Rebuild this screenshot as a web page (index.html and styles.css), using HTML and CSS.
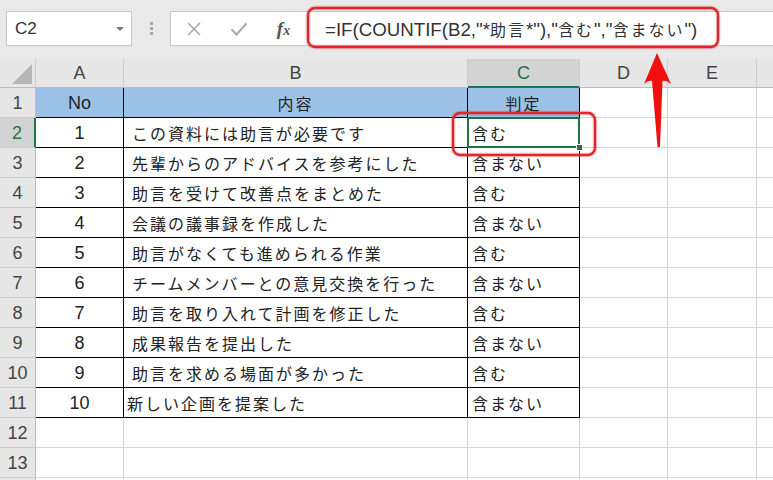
FILE: index.html
```html
<!DOCTYPE html>
<html lang="ja">
<head>
  <meta charset="UTF-8">
  <title>COUNTIF 部分一致</title>
  <link rel="stylesheet" href="styles.css">
</head>
<body>
  <div class="toolbar">
    <div class="namebox"><span>C2</span><span class="caret"></span></div>
    <div class="grip"><span></span><span></span><span></span></div>
    <div class="fbar">
      <div class="fbtns">
        <span class="fbtn">
          <svg width="16" height="16" viewBox="0 0 16 16"><path d="M2 2L14 14M14 2L2 14" stroke="#a9a9a9" stroke-width="1.6" fill="none"/></svg>
        </span>
        <span class="fbtn">
          <svg width="18" height="16" viewBox="0 0 18 16"><path d="M1.5 8.5L6.5 13.5L16.5 2.5" stroke="#a9a9a9" stroke-width="2" fill="none"/></svg>
        </span>
        <span class="fbtn fx"><i>f</i><i class="x">x</i></span>
      </div>
      <div class="formula">=IF(COUNTIF(B2,"*<span class="jp">助言</span>*"),"<span class="jp">含む</span>","<span class="jp">含まない</span>")</div>
    </div>
  </div>

  <table class="sheet">
    <colgroup>
      <col class="c-row"><col class="c-a"><col class="c-b"><col class="c-c"><col class="c-d"><col class="c-e"><col class="c-f">
    </colgroup>
    <thead>
      <tr>
        <th class="corner"><span class="tri"></span></th>
        <th>A</th><th>B</th><th class="sel">C</th><th>D</th><th>E</th><th></th>
      </tr>
    </thead>
    <tbody>
      <tr><th>1</th><td class="t hd">No</td><td class="t hd jp">内容</td><td class="t hd jp">判定</td><td></td><td></td><td></td></tr>
      <tr><th class="sel">2</th><td class="t num">1</td><td class="t jp txt">この資料には助言が必要です</td><td class="t jp res active">含む</td><td></td><td></td><td></td></tr>
      <tr><th>3</th><td class="t num">2</td><td class="t jp txt">先輩からのアドバイスを参考にした</td><td class="t jp res">含まない</td><td></td><td></td><td></td></tr>
      <tr><th>4</th><td class="t num">3</td><td class="t jp txt">助言を受けて改善点をまとめた</td><td class="t jp res">含む</td><td></td><td></td><td></td></tr>
      <tr><th>5</th><td class="t num">4</td><td class="t jp txt">会議の議事録を作成した</td><td class="t jp res">含まない</td><td></td><td></td><td></td></tr>
      <tr><th>6</th><td class="t num">5</td><td class="t jp txt">助言がなくても進められる作業</td><td class="t jp res">含む</td><td></td><td></td><td></td></tr>
      <tr><th>7</th><td class="t num">6</td><td class="t jp txt">チームメンバーとの意見交換を行った</td><td class="t jp res">含まない</td><td></td><td></td><td></td></tr>
      <tr><th>8</th><td class="t num">7</td><td class="t jp txt">助言を取り入れて計画を修正した</td><td class="t jp res">含む</td><td></td><td></td><td></td></tr>
      <tr><th>9</th><td class="t num">8</td><td class="t jp txt">成果報告を提出した</td><td class="t jp res">含まない</td><td></td><td></td><td></td></tr>
      <tr><th>10</th><td class="t num">9</td><td class="t jp txt">助言を求める場面が多かった</td><td class="t jp res">含む</td><td></td><td></td><td></td></tr>
      <tr><th>11</th><td class="t num">10</td><td class="t jp txt tight">新しい企画を提案した</td><td class="t jp res">含まない</td><td></td><td></td><td></td></tr>
      <tr><th>12</th><td></td><td></td><td></td><td></td><td></td><td></td></tr>
      <tr><th>13</th><td></td><td></td><td></td><td></td><td></td><td></td></tr>
      <tr class="cut"><th></th><td></td><td></td><td></td><td></td><td></td><td></td></tr>
    </tbody>
  </table>

  <!-- red annotations drawn over the sheet -->
  <svg class="marks" width="773" height="480" viewBox="0 0 773 480">
    <rect x="308" y="8" width="410" height="39" rx="7" fill="none" stroke="rgba(190,0,0,0.15)" stroke-width="5"/>
    <rect x="308" y="8" width="410" height="39" rx="7" fill="none" stroke="#e0262b" stroke-width="2.4"/>
    <rect x="453" y="113" width="142" height="42" rx="7" fill="none" stroke="rgba(190,0,0,0.15)" stroke-width="5"/>
    <rect x="453" y="113" width="142" height="42" rx="7" fill="none" stroke="#e0262b" stroke-width="2.4"/>
    <path d="M657 53 L671 84 Q666 80 662.5 81 L660 147 L657.5 147 L652 81 Q648 80 644 84 Z" fill="#f20f0f"/>
  </svg>
</body>
</html>
```

FILE: styles.css
```css
/* page */
body {
  margin: 0;
  width: 773px;
  height: 480px;
  overflow: hidden;
  position: relative;
  background: #fff;
  font-family: "Liberation Sans", "Noto Sans CJK JP", sans-serif;
  font-size: 18px;
  color: #222;
}

/* name box + formula bar */
.toolbar {
  display: flex;
  height: 59px;
  box-sizing: border-box;
  padding: 11px 0 0 6px;
  background: #e9e9e9;
}
.namebox {
  width: 126px;
  height: 35px;
  box-sizing: border-box;
  display: flex;
  align-items: center;
  justify-content: space-between;
  padding: 0 7px 0 8px;
  background: #fff;
  border: 1px solid #c8c8c8;
  font-size: 17px;
  color: #333;
}
.caret {
  width: 0;
  height: 0;
  border-left: 4px solid transparent;
  border-right: 4px solid transparent;
  border-top: 4px solid #777;
}
.grip {
  width: 38px;
  height: 35px;
  display: flex;
  flex-direction: column;
  align-items: center;
  justify-content: center;
  gap: 2px;
}
.grip span { width: 3px; height: 3px; background: #aaa; }
.fbar {
  flex: 1;
  height: 35px;
  box-sizing: border-box;
  display: flex;
  align-items: center;
  background: #fff;
  border: 1px solid #c8c8c8;
  border-right: 0;
}
.fbtns { width: 136px; display: flex; align-items: center; }
.fbtn {
  width: 45px;
  display: flex;
  justify-content: center;
  align-items: center;
}
.fx {
  font-family: "Liberation Serif", serif;
  font-weight: bold;
  font-size: 19px;
  color: #555;
}
.fx .x { font-size: 14px; margin-top: 5px; }
.formula {
  padding-left: 18px;
  white-space: nowrap;
  font-size: 18.7px;
  color: #333;
}
.formula .jp { font-family: "Noto Sans CJK JP", sans-serif; font-size: 16px; }

/* sheet grid */
.sheet {
  table-layout: fixed;
  border-collapse: separate;
  border-spacing: 0;
  width: 797px;
}
.c-row { width: 36px; }
.c-a { width: 88px; }
.c-b { width: 344px; }
.c-c { width: 112px; }
.c-d { width: 88px; }
.c-e { width: 89px; }
.c-f { width: 40px; }

.sheet tr { height: 30px; }
.sheet thead tr { height: 29px; }
.sheet th, .sheet td {
  padding: 0;
  border-right: 1px solid #d4d4d4;
  border-bottom: 1px solid #d4d4d4;
  line-height: 20px;
  white-space: nowrap;
  overflow: hidden;
}
.sheet th {
  background: #e6e6e6;
  font-weight: normal;
  color: #444;
  text-align: center;
}
.sheet thead th { border-right-color: #cdcdcd; border-bottom-color: #bdbdbd; }
.sheet tbody th { border-right-color: #bdbdbd; border-bottom-color: #cdcdcd; }
.sheet thead th.sel {
  background: #d3d3d3;
  color: #217346;
  border-bottom: 2px solid #217346;
}
.sheet tbody th.sel {
  background: #d3d3d3;
  color: #217346;
  border-right: 2px solid #217346;
}

.corner { position: relative; }
.tri {
  position: absolute;
  right: 3px;
  bottom: 3px;
  width: 0;
  height: 0;
  border-left: 20px solid transparent;
  border-bottom: 20px solid #b5b5b5;
}

/* the data table */
.sheet td.t { border-right-color: #000; border-bottom-color: #000; }
.hd { background: #9bc2e6; text-align: center; }
.num { text-align: center; }
.jp {
  font-family: "Noto Sans CJK JP", sans-serif;
  font-size: 16px;
  letter-spacing: 2px;
}
.txt { padding-left: 8px !important; }
.txt.tight { padding-left: 3px !important; }
.res { padding-left: 4px !important; }

.active { position: relative; overflow: visible !important; }
.active::after {
  content: "";
  position: absolute;
  left: -1px;
  top: -1px;
  right: -1px;
  bottom: -1px;
  border: 2px solid #217346;
}
.active::before {
  content: "";
  position: absolute;
  right: -4px;
  bottom: -4px;
  width: 5px;
  height: 5px;
  background: #217346;
  border: 1px solid #fff;
  z-index: 1;
}

.marks { position: absolute; left: 0; top: 0; pointer-events: none; }
```
